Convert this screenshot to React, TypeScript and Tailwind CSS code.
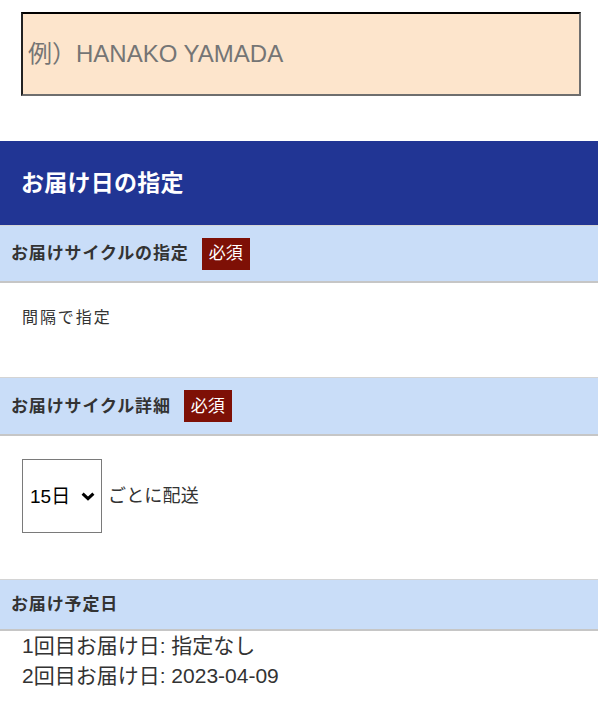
import React from "react";

const FONT = { fontFamily: '"Liberation Sans", "Noto Sans CJK JP", sans-serif' };

function Badge() {
  return (
    <span className="ml-[13px] inline-flex h-[32px] w-[48px] items-center justify-center bg-[#7e1006] text-[17px] font-normal leading-none text-white">
      必須
    </span>
  );
}

function SectionHeader({ label, required, h }: { label: string; required?: boolean; h: string }) {
  return (
    <div className={`flex items-center border-t border-b-2 border-t-[#d4d4d4] border-b-[#c6c6c6] bg-[#c9ddf8] pl-[11px] ${h}`}>
      <span className="text-[17px] font-bold leading-none tracking-[0.05em] text-[#333]">{label}</span>
      {required && <Badge />}
    </div>
  );
}

export default function App() {
  return (
    <div className="w-[598px] bg-white text-[#333]" style={FONT}>
      <div className="px-[21px] pt-[12px] pb-[45px]">
        <input
          placeholder="例）HANAKO YAMADA"
          className="block h-[84px] w-[560px] border-2 border-t-black border-l-[#222] border-r-[#6e6e6e] border-b-[#6e6e6e] bg-[#fde5cc] px-[5px] text-[24px] text-[#333] outline-none placeholder:text-[#757575]"
          style={FONT}
        />
      </div>

      <div className="flex h-[84px] items-center bg-[#213594] px-[21px]">
        <h2 className="text-[23px] font-bold leading-none tracking-[0.01em] text-white">お届け日の指定</h2>
      </div>

      <SectionHeader label="お届けサイクルの指定" required h="h-[58px]" />
      <div className="h-[94px] px-[22px] pt-[23px]">
        <p className="text-[16px] leading-[24px] tracking-[0.12em] text-[#333]">間隔で指定</p>
      </div>

      <SectionHeader label="お届けサイクル詳細" required h="h-[59px]" />
      <div className="flex h-[143px] items-start px-[22px] pt-[23px]">
        <div className="flex h-[74px] w-[80px] items-center border border-[#7a7a7a] bg-white pl-[7px]">
          <span className="text-[19px] leading-none text-black">15日</span>
          <svg className="ml-[11px]" width="14" height="9" viewBox="0 0 14 9">
            <path d="M1.6 1.6 L7 6.6 L12.4 1.6" fill="none" stroke="#000" strokeWidth="3" />
          </svg>
        </div>
        <span className="ml-[6px] mt-[25px] text-[18px] leading-[24px] tracking-[0.01em] text-[#333]">ごとに配送</span>
      </div>

      <SectionHeader label="お届け予定日" h="h-[52px]" />
      <div className="px-[22px] pt-[0px] pb-[20px] text-[21px] leading-[30px] text-[#333]">
        <p>1回目お届け日: 指定なし</p>
        <p>2回目お届け日: 2023-04-09</p>
      </div>
    </div>
  );
}
